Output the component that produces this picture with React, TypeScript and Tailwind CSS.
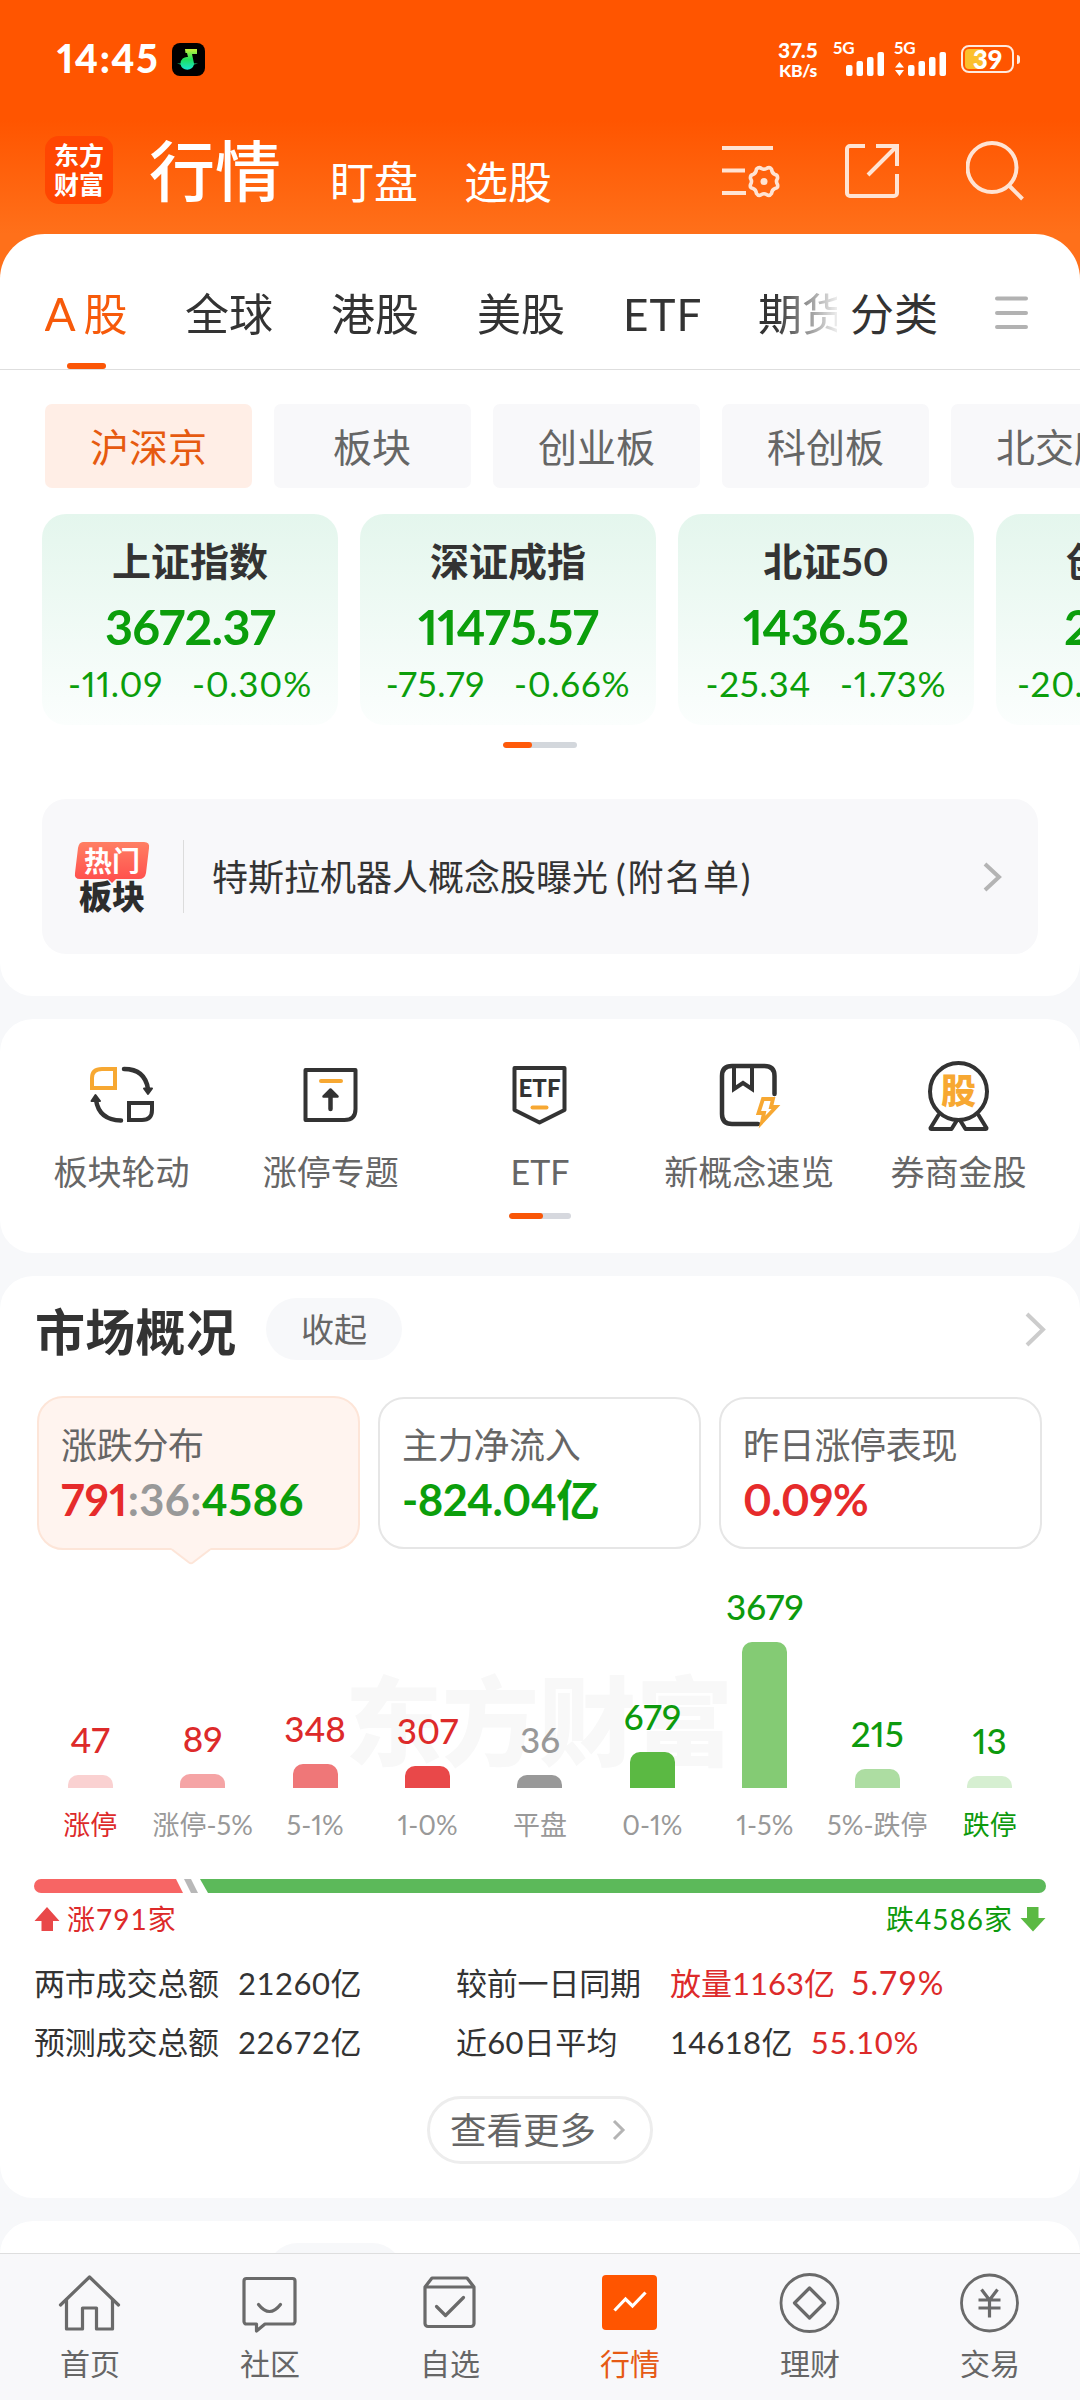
import type { ReactNode } from 'react';

const tabs = [
  { name: '全球', width: 'w-[88px]' },
  { name: '港股', width: 'w-[88px]' },
  { name: '美股', width: 'w-[88px]' },
  { name: 'ETF', width: 'w-[77px] tracking-[1px]' },
  { name: '期货', width: 'w-[88px]' },
];

const boards = ['沪深京', '板块', '创业板', '科创板', '北交所'];

const indices = [
  { name: '上证指数', value: '3672.37', diff: '-11.09', pct: '-0.30%' },
  { name: '深证成指', value: '11475.57', diff: '-75.79', pct: '-0.66%' },
  { name: '北证50', value: '1436.52', diff: '-25.34', pct: '-1.73%' },
  { name: '创业板指', value: '2467.18', diff: '-20.36', pct: '-0.82%' },
];

const bars = [
  { label: '涨停', count: 47, height: 13, bar: 'bg-[#fad1d1]', text: 'text-[#dd2a2a]', labelColor: 'text-[#dd2a2a]' },
  { label: '涨停-5%', count: 89, height: 14, bar: 'bg-[#f5a4a5]', text: 'text-[#dd2a2a]', labelColor: 'text-[#999]' },
  { label: '5-1%', count: 348, height: 24, bar: 'bg-[#ef7778]', text: 'text-[#dd2a2a]', labelColor: 'text-[#999]' },
  { label: '1-0%', count: 307, height: 22, bar: 'bg-[#e94849]', text: 'text-[#dd2a2a]', labelColor: 'text-[#999]' },
  { label: '平盘', count: 36, height: 13, bar: 'bg-[#999]', text: 'text-[#999]', labelColor: 'text-[#999]' },
  { label: '0-1%', count: 679, height: 36, bar: 'bg-[#5bb943]', text: 'text-[#0d9a0d]', labelColor: 'text-[#999]' },
  { label: '1-5%', count: 3679, height: 146, bar: 'bg-[#84cb74]', text: 'text-[#0d9a0d]', labelColor: 'text-[#999]' },
  { label: '5%-跌停', count: 215, height: 19, bar: 'bg-[#addda2]', text: 'text-[#0d9a0d]', labelColor: 'text-[#999]' },
  { label: '跌停', count: 13, height: 12, bar: 'bg-[#d6efd1]', text: 'text-[#0d9a0d]', labelColor: 'text-[#0d9a0d]' },
];

function SignalBars() {
  return (
    <svg width="39" height="24" viewBox="0 0 39 24" fill="#fff">
      <rect x="0" y="13" width="6.5" height="11" rx="2" />
      <rect x="10.5" y="9" width="6.5" height="15" rx="2" />
      <rect x="21" y="5" width="6.5" height="19" rx="2" />
      <rect x="31.5" y="0" width="6.5" height="24" rx="2" />
    </svg>
  );
}

function StatusBar() {
  return (
    <div className="flex h-[118px] pl-[57px] text-white">
      <div className="mt-[38px] h-[40px] w-[115px] text-[39px] leading-[40px] font-black tracking-[1.5px]">14:45</div>
      <svg className="mt-[43px]" width="33" height="33" viewBox="0 0 33 33">
        <defs>
          <linearGradient id="note" x1="0" y1="0" x2="0" y2="1">
            <stop offset="0" stopColor="#c8f03c" />
            <stop offset="0.5" stopColor="#1fe05a" />
            <stop offset="1" stopColor="#19e6d0" />
          </linearGradient>
        </defs>
        <rect width="33" height="33" rx="8" fill="#000" />
        <path d="M13 6H25V11H20L22 20.500H26L22 21.500A7 7 0 0 1 8.500 21.500L5 20.500H8.500A6.500 6.500 0 0 1 16 14L15 10H13.500z" fill="url(#note)" />
      </svg>
      <div className="mt-[40px] ml-[573px] flex h-[40px] w-[40px] flex-col items-center font-black">
        <span className="text-[21px] leading-[20px] tracking-[0.3px]">37.5</span>
        <span className="text-[17.5px] leading-[22px] tracking-[-0.3px]">KB/s</span>
      </div>
      <div className="relative mt-[52px] ml-[28px] h-[24px] w-[39px]">
        <span className="absolute -top-[13px] -left-[13px] text-[17px] leading-[18px] font-bold">5G</span>
        <SignalBars />
      </div>
      <div className="relative mt-[52px] ml-[23px] h-[24px] w-[39px]">
        <span className="absolute -top-[13px] -left-[14px] text-[17px] leading-[18px] font-bold">5G</span>
        <svg className="absolute top-[10px] -left-[13px]" width="9" height="14" viewBox="0 0 9 14" fill="#fff">
          <path d="M4.500 0L9 5.500H0zM4.500 14L9 8H0z" />
        </svg>
        <SignalBars />
      </div>
      <div className="mt-[45px] ml-[14px] flex h-[28px] items-center">
        <div className="relative flex h-[28px] w-[53px] items-center justify-center rounded-[8px] border-[2.5px] border-[#ffeadf]">
          <div className="absolute top-[2px] bottom-[2px] left-[2px] w-[18px] rounded-l-[4px] bg-[#fbc02d]" />
          <span className="relative text-[26px] leading-[24px] font-black">39</span>
        </div>
        <div className="ml-[3px] h-[9px] w-[3px] rounded-r-full bg-[#ffeadf]" />
      </div>
    </div>
  );
}

function TitleBar() {
  return (
    <div className="flex h-[116px] pl-[45px] text-white">
      <div className="mt-[18px] flex h-[68px] w-[68px] flex-col items-center justify-center rounded-[14px] bg-[#ff4602] text-[25px] leading-[29px] font-bold">
        <span>东方</span>
        <span>财富</span>
      </div>
      <div className="mt-[16px] ml-[36px] w-[181px] text-[66px] leading-[74px] font-medium">行情</div>
      <div className="mt-[42px] w-[134px] text-[44px] leading-[44px]">盯盘</div>
      <div className="mt-[42px] w-[258px] text-[44px] leading-[44px]">选股</div>
      <svg className="mt-[26px] w-[60px]" height="56" viewBox="0 0 60 56" fill="none" stroke="#ffe3d3" strokeWidth="4">
        <path d="M0 4h51M0 26.500h23M0 49h24" />
        <path
          strokeWidth="3.600"
          strokeLinejoin="round"
          d="M34.500 25Q37 22.500 39.500 24.500 42 26 44.500 24.500 47.500 22.500 49.500 25 50 29.500 53 30.500 56 31 55.500 34.500 53.500 37.500 55.500 40.500 56.500 44 53 44.500 50 45.500 49.500 49.500 47.500 52.500 44.500 50.500 42 49 39.500 50.500 36.500 52.500 34.500 49.500 34 45.500 31 44.500 27.500 44 28.500 40.500 30.500 37.500 28.500 34.500 28 31 31 30.500 34 29.500 34.500 25z"
        />
        <circle cx="42" cy="37.500" r="3.500" fill="#ffe3d3" stroke="none" />
      </svg>
      <svg className="mt-[25px] ml-[63px]" width="54" height="56" viewBox="0 0 54 56" fill="none" stroke="#ffe3d3" strokeWidth="4">
        <path d="M20 3H5a3 3 0 0 0-3 3v44a3 3 0 0 0 3 3h44a3 3 0 0 0 3-3V31" />
        <path d="M31 3h21v20M51 4L23 32" />
      </svg>
      <svg className="mt-[22px] ml-[67px]" width="60" height="62" viewBox="0 0 60 62" fill="none" stroke="#ffe3d3" strokeWidth="4">
        <circle cx="26" cy="27.500" r="24.500" />
        <path d="M43 45.500l13.500 13.500" />
      </svg>
    </div>
  );
}

function MarketTabs() {
  return (
    <div className="flex h-[136px] border-b border-[#dedede] pl-[45px] text-[44px] leading-[80px] text-[#333]">
      <div className="flex w-[792px] gap-[58px] overflow-hidden whitespace-nowrap [mask-image:linear-gradient(to_right,#000_730px,#0000_798px)]">
        <div className="flex w-[82px] shrink-0 flex-col items-center text-[#f75a0a]">
          <div className="mt-[40px] flex h-[80px] gap-[8px]">
            <span className="text-[46px]">A</span>
            <span>股</span>
          </div>
          <div className="mt-[9px] h-[6px] w-[39px] rounded-full bg-[#fb5607]" />
        </div>
        {tabs.map((t) => (
          <div key={t.name} className={`mt-[40px] shrink-0 text-center ${t.width}`}>
            {t.name}
          </div>
        ))}
      </div>
      <div className="mt-[40px] ml-[13px] w-[145px]">分类</div>
      <svg className="mt-[62px]" width="33" height="34" viewBox="0 0 33 34" stroke="#b2b2b2" strokeWidth="4" strokeLinecap="round">
        <path d="M2 2.500h29M2 17h29M2 31h29" />
      </svg>
    </div>
  );
}

function Chevron({ width, height, color, stroke = 4 }: { width: number; height: number; color: string; stroke?: number }) {
  return (
    <svg width={width} height={height} viewBox={`0 0 ${width} ${height}`} fill="none" stroke={color} strokeWidth={stroke}>
      <path d={`M2 2L${width - 3} ${height / 2}L2 ${height - 2}`} />
    </svg>
  );
}

function HotBoard() {
  return (
    <div className="mx-[42px] mt-[51px] flex h-[155px] items-center rounded-[24px] bg-[#f8f8fa] pl-[32px]">
      <div className="relative flex h-[72px] w-[76px] flex-col items-center">
        <svg className="absolute top-0 left-0" width="76" height="42" viewBox="0 0 76 42">
          <defs>
            <linearGradient id="hot" x1="0" y1="0" x2="0" y2="1">
              <stop offset="0" stopColor="#ff7f63" />
              <stop offset="1" stopColor="#ff4c4c" />
            </linearGradient>
          </defs>
          <path d="M9 1h61q6 0 5 6l-3 25q-1 6-7 6H42l-4 4-4-4H6q-6 0-5-6L4 7q1-6 5-6z" fill="url(#hot)" />
        </svg>
        <span className="relative mt-[5px] text-[28px] leading-[30px] font-bold text-white">热门</span>
        <span className="mt-[5px] text-[33px] leading-[30px] font-black text-[#2d2d2d]">板块</span>
      </div>
      <div className="ml-[33px] h-[73px] w-px bg-[#dcdcdc]" />
      <div className="ml-[28px] flex-1 text-[36px] leading-[48px] text-[#333]">
        特斯拉机器人概念股曝光<span className="ml-[8px] tracking-[1.8px]">(附名单)</span>
      </div>
      <div className="mr-[36px]">
        <Chevron width={19} height={30} color="#b4b4b4" />
      </div>
    </div>
  );
}

function Shortcut({ label, children }: { label: string; children: ReactNode }) {
  return (
    <div className="flex w-[209px] flex-col items-center">
      <svg width="70" height="74" viewBox="0 0 70 74" fill="none" stroke="#333" strokeWidth="4.500" strokeLinejoin="round" strokeLinecap="round">
        {children}
      </svg>
      <span className="mt-[19px] text-[34px] leading-[40px] text-[#666]">{label}</span>
    </div>
  );
}

function Shortcuts() {
  return (
    <section className="mt-[23px] h-[234px] rounded-[33px] bg-white px-[17px] pt-[40px]">
      <div className="flex justify-between">
        <Shortcut label="板块轮动">
          <path d="M5 29V19Q5 10 15 10H28V29z" stroke="#f7a832" strokeWidth="4" strokeLinejoin="miter" />
          <path d="M42 44H65V51Q65 61 55 61H42z" strokeWidth="4" strokeLinejoin="miter" />
          <path d="M37 10Q58 10 61 30" />
          <path d="M57 29.500h8L61 35z" fill="#333" strokeWidth="2" />
          <path d="M34 61.500Q12 61 9 41" />
          <path d="M4.500 42h8.500L8.500 36z" fill="#333" strokeWidth="2" />
        </Shortcut>
        <Shortcut label="涨停专题">
          <path d="M9.500 11H59.500V50Q59.500 61 48.500 61H9.500z" strokeWidth="4" />
          <path d="M25 22H45" stroke="#f7a832" strokeWidth="4" />
          <path d="M34.500 50V34" />
          <path d="M27.500 37.500L34.500 30.500 41.500 37.500z" fill="#333" strokeWidth="2.500" />
        </Shortcut>
        <Shortcut label="ETF">
          <path d="M9.500 9H59.500V51L34.500 63.500 9.500 51z" strokeWidth="4" />
          <text x="34.500" y="38" textAnchor="middle" fontSize="24" fontWeight="900" fill="#333" stroke="none" textLength="42">
            ETF
          </text>
          <path d="M27.500 48.500H41.500" stroke="#f7a832" strokeWidth="4" />
        </Shortcut>
        <Shortcut label="新概念速览">
          <path d="M60.500 35V17Q60.500 7 50.500 7H18Q8 7 8 17V55Q8 65 18 65H44" strokeWidth="4.500" />
          <path d="M20 8V30L29 24 38 30V8" strokeWidth="4" strokeLinejoin="miter" />
          <path d="M49 40H59L57 48H62L48 63 50 54H44.500z" stroke="#f7a832" strokeWidth="3.800" strokeLinejoin="miter" />
        </Shortcut>
        <Shortcut label="券商金股">
          <path d="M14.500 56L6.500 69Q6.500 70 7.500 70H27.500L32.500 62M54.500 56L62.500 69Q62.500 70 61.500 70H41.500L36.500 62" strokeWidth="4" />
          <circle cx="34.500" cy="32.500" r="28.500" strokeWidth="4" fill="#fff" />
          <text x="34.500" y="45" textAnchor="middle" fontSize="35" fontWeight="900" fill="#f7a832" stroke="none">
            股
          </text>
        </Shortcut>
      </div>
      <div className="mx-auto mt-[21px] h-[6px] w-[62px] overflow-hidden rounded-full bg-[#d6d8de]">
        <div className="h-full w-[34px] rounded-full bg-[#f95607]" />
      </div>
    </section>
  );
}

function SectionTitle({ title, className = 'pt-[3px]' }: { title: string; className?: string }) {
  return (
    <div className="flex h-[62px] items-start">
      <h2 className={`w-[231px] text-[50px] leading-[62px] font-bold tracking-[0.3px] text-[#333] ${className}`}>{title}</h2>
      <span className="h-[62px] w-[136px] rounded-full bg-[#f7f8fa] text-center text-[33px] leading-[63px] text-[#666]">收起</span>
    </div>
  );
}

function StatBox({ label, active, children }: { label: string; active?: boolean; children: ReactNode }) {
  return (
    <div
      className={`relative w-[323px] rounded-[26px] border-2 pl-[22px] ${
        active ? 'h-[154px] border-[#fde5d8] bg-[#fff4ef] pt-[24px]' : 'mt-px h-[152px] border-[#e6e6e6] pt-[23px]'
      }`}
    >
      <div className="text-[36px] leading-[46px] tracking-[-0.3px] text-[#666]">{label}</div>
      <div className={`mt-[7px] text-[43.5px] leading-[48px] font-bold ${active ? 'tracking-[0.4px]' : 'tracking-[-0.5px]'}`}>{children}</div>
      {active && (
        <svg className="absolute top-[150px] left-[132px]" width="40" height="17" viewBox="0 0 40 17">
          <path d="M0 0L18 14Q20 16 22 14L40 0z" fill="#fff4ef" />
          <path d="M1 1.500L18 14.500Q20 16 22 14.500L39 1.500" fill="none" stroke="#fde5d8" strokeWidth="2" />
        </svg>
      )}
    </div>
  );
}

function Distribution() {
  return (
    <div className="relative mt-[14px] h-[277px]">
      <div className="absolute top-[92px] left-[311px] text-[97px] leading-[130px] font-black whitespace-nowrap text-[#f8f8f8]">东方财富</div>
      <div className="relative flex h-full">
        {bars.map((b) => (
          <div key={b.label} className="-mx-2 flex flex-1 flex-col items-center justify-end">
            <span className={`text-[35px] leading-[40px] font-medium ${b.text}`}>{b.count}</span>
            <div className={`mt-[16px] w-[45px] rounded-t-[10px] ${b.bar}`} style={{ height: b.height }} />
            <span className={`mt-[21px] text-[27px] leading-[32px] whitespace-nowrap ${b.labelColor}`}>{b.label}</span>
          </div>
        ))}
      </div>
    </div>
  );
}

function MarketOverview() {
  return (
    <section className="mt-[23px] h-[922px] rounded-[33px] bg-white pt-[22px]">
      <div className="flex items-center justify-between pr-[34px] pl-[35px]">
        <SectionTitle title="市场概况" />
        <Chevron width={21} height={35} color="#ccc" />
      </div>

      <div className="mt-[36px] flex h-[154px] gap-[18px] pl-[37px]">
        <StatBox label="涨跌分布" active>
          <span className="text-[#e62b2b]">791</span>
          <span className="text-[#999]">:36:</span>
          <span className="text-[#0b9e0b]">4586</span>
        </StatBox>
        <StatBox label="主力净流入">
          <span className="text-[#0b9e0b]">-824.04亿</span>
        </StatBox>
        <StatBox label="昨日涨停表现">
          <span className="text-[#e62b2b]">0.09%</span>
        </StatBox>
      </div>

      <div className="px-[34px]">
        <Distribution />
        <svg className="mt-[38px]" width="1012" height="14" viewBox="0 0 1012 14">
          <path d="M7 0H142L149 14H7A7 7 0 0 1 7 0z" fill="#f76564" />
          <path d="M150 0H157L164 14H157z" fill="#b8b8b8" />
          <path d="M166 0H1005A7 7 0 0 1 1005 14H174z" fill="#5cb95a" />
        </svg>
        <div className="mt-[10px] flex h-[32px] items-center text-[28px] leading-[32px] tracking-[1px] tabular-nums">
          <svg width="26" height="25" viewBox="0 0 26 25" fill="#e94849">
            <path d="M13 0L25.500 14H19V24H7.500V14H.5z" />
          </svg>
          <span className="ml-[7px] text-[#dd2a2a]">涨791家</span>
          <span className="mr-[7px] ml-auto text-[#0d9a0d]">跌4586家</span>
          <svg width="26" height="25" viewBox="0 0 26 25" fill="#5bb943">
            <path d="M13 24.500L.5 11H7V0H18.500V11H25.500z" />
          </svg>
        </div>
      </div>

      <div className="mt-[28px] grid grid-cols-[204px_218px_214px_1fr] gap-y-[19px] pl-[34px] text-[31px] leading-[40px] text-[#333] tabular-nums">
        <span className="tracking-[-0.2px]">两市成交总额</span>
        <span className="tracking-[0.5px]">21260亿</span>
        <span className="tracking-[-0.2px]">较前一日同期</span>
        <span className="text-[#dd2a2a]">
          放量1163亿<span className="ml-[16px] text-[32px] tracking-[0.9px]">5.79%</span>
        </span>
        <span className="tracking-[-0.2px]">预测成交总额</span>
        <span className="tracking-[0.5px]">22672亿</span>
        <span className="tracking-[0.3px]">近60日平均</span>
        <span>
          <span className="tracking-[0.3px]">14618亿</span>
          <span className="ml-[18px] tracking-[0.7px] text-[#dd2a2a]">55.10%</span>
        </span>
      </div>

      <div className="mx-auto mt-[34px] flex h-[68px] w-[226px] items-center rounded-full border-[3px] border-[#ededed] pl-[20px] text-[36.5px] leading-[60px] text-[#666]">
        <span className="mr-[16px]">查看更多</span>
        <Chevron width={14} height={22} color="#b4b4b4" stroke={3} />
      </div>
    </section>
  );
}

function NavItem({ label, active, children }: { label: string; active?: boolean; children: ReactNode }) {
  return (
    <div className={`flex flex-1 flex-col items-center pt-[16px] ${active ? 'text-[#e65a14]' : 'text-[#666]'}`}>
      <svg width="66" height="66" viewBox="0.5 0.5 66 66" fill="none" stroke="#6a6a6a" strokeWidth="3.200" strokeLinejoin="round" strokeLinecap="round">
        {children}
      </svg>
      <span className="mt-[9px] text-[30px] leading-[36px]">{label}</span>
    </div>
  );
}

function BottomNav() {
  return (
    <nav className="flex h-[147px] shrink-0 border-t border-[#dedede] bg-[#f8f8fa]">
      <NavItem label="首页">
        <path d="M4 35.500L33 7.500 62 35.500" />
        <path d="M10 30V59.500H26V38.500H40V59.500H56V30" />
      </NavItem>
      <NavItem label="社区">
        <path d="M10 9H56a2.500 2.500 0 0 1 2.500 2.500V52a2.500 2.500 0 0 1-2.500 2.500H28.500L20 61.500V54.500H10a2.500 2.500 0 0 1-2.500-2.500V11.500A2.500 2.500 0 0 1 10 9z" />
        <path d="M22 35q11 14 22 0" />
      </NavItem>
      <NavItem label="自选">
        <path d="M8.500 17.500L15.500 8.500H50.500L57.500 17.500V54a3 3 0 0 1-3 3h-43a3 3 0 0 1-3-3zM8.500 17.500H57.500" />
        <path d="M20 37l9 9 18-18" />
      </NavItem>
      <NavItem label="行情" active>
        <rect x="5.500" y="5.500" width="55" height="55" rx="4" fill="#ff5500" stroke="none" />
        <path d="M18 41L29 29.500 36 36.500 49 23" stroke="#fff" strokeLinecap="butt" strokeLinejoin="miter" />
      </NavItem>
      <NavItem label="理财">
        <circle cx="33" cy="33.500" r="28.500" strokeWidth="2.800" />
        <path d="M33 18.500L48 33.500 33 48.500 18 33.500z" />
      </NavItem>
      <NavItem label="交易">
        <circle cx="33" cy="33.500" r="28" strokeWidth="2.800" />
        <path d="M25 20L33 30.500 41 20M22 30.500H44M22 38.500H44M33 30.500V48" strokeLinecap="butt" />
      </NavItem>
    </nav>
  );
}

export default function App() {
  return (
    <div className="flex h-[2400px] w-[1080px] flex-col overflow-hidden bg-[#f7f8fa] font-[Lato,'Noto_Sans_CJK_SC',sans-serif] proportional-nums">
      <header className="h-[280px] shrink-0 bg-[linear-gradient(to_bottom,#ff5500_120px,#ff701a_234px)]">
        <StatusBar />
        <TitleBar />
      </header>

      <main className="-mt-[46px] min-h-0 flex-1 overflow-hidden">
        <section className="h-[762px] rounded-t-[45px] rounded-b-[33px] bg-white">
          <MarketTabs />

          <div className="mt-[34px] flex gap-[22px] overflow-hidden pl-[45px]">
            {boards.map((name, i) => (
              <div
                key={name}
                className={`h-[84px] shrink-0 rounded-[7px] text-[39px] leading-[86px] ${
                  i === 0 ? 'bg-[#ffeee6] text-[#e65a10]' : 'bg-[#f8f8fa] text-[#666]'
                } ${name.length === 2 ? 'w-[197px] pl-[59px]' : 'w-[207px] pl-[45px]'}`}
              >
                {name}
              </div>
            ))}
          </div>

          <div className="mt-[26px] flex gap-[22px] overflow-hidden pl-[42px]">
            {indices.map((item) => (
              <div
                key={item.name}
                className="flex h-[211px] w-[296px] shrink-0 flex-col items-center rounded-[24px] bg-gradient-to-b from-[#e4f6ed] to-[#fbfefd] text-[#0b9e0b]"
              >
                <div className="mt-[24px] text-[39px] leading-[46px] font-bold text-[#333]">{item.name}</div>
                <div className="mt-[18px] text-[48.5px] leading-[48px] font-bold tracking-[-0.7px]">{item.value}</div>
                <div className="mt-[13px] flex gap-[29px] text-[35px] leading-[40px]">
                  <span className="tracking-[0.7px]">{item.diff}</span>
                  <span className="tracking-[0.8px]">{item.pct}</span>
                </div>
              </div>
            ))}
          </div>

          <div className="mx-auto mt-[17px] h-[6px] w-[74px] overflow-hidden rounded-full bg-[#d3d7dc]">
            <div className="h-full w-[29px] rounded-full bg-[#ff5a0a]" />
          </div>

          <HotBoard />
        </section>

        <Shortcuts />
        <MarketOverview />

        <section className="mt-[23px] h-[300px] rounded-t-[33px] bg-white pt-[22px] pl-[36px]">
          <SectionTitle title="主力动向" className="pt-[5px]" />
        </section>
      </main>

      <BottomNav />
    </div>
  );
}
